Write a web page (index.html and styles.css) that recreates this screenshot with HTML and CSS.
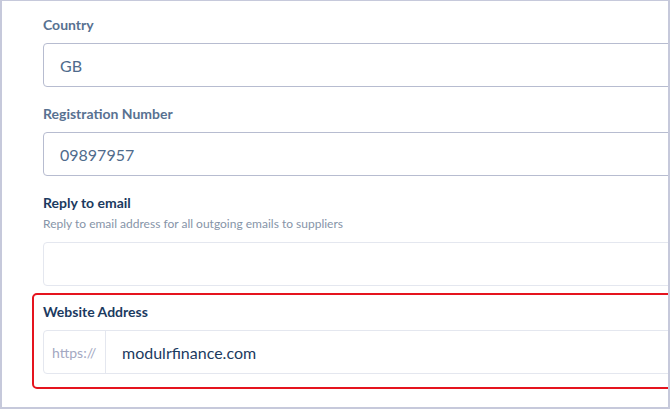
FILE: index.html
```html
<!DOCTYPE html>
<html lang="en">
<head>
<meta charset="utf-8">
<title>Company details</title>
<link rel="stylesheet" href="styles.css">
</head>
<body>
<div class="frame">
  <form class="form">
    <div class="field">
      <label class="label label-muted">Country</label>
      <div class="input input-strong">GB</div>
    </div>
    <div class="field">
      <label class="label label-muted">Registration Number</label>
      <div class="input input-strong">09897957</div>
    </div>
    <div class="field">
      <label class="label label-dark label-with-hint">Reply to email</label>
      <p class="hint">Reply to email address for all outgoing emails to suppliers</p>
      <div class="input input-light"></div>
    </div>
    <div class="field field-error">
      <label class="label label-dark">Website Address</label>
      <div class="input input-light input-group">
        <span class="prefix">https://</span>
        <span class="value">modulrfinance.com</span>
      </div>
    </div>
  </form>
</div>
</body>
</html>
```

FILE: styles.css
```css
* { box-sizing: border-box; }

html, body {
  margin: 0;
  padding: 0;
  background: #ffffff;
}

body {
  font-family: Lato, "Open Sans", "Liberation Sans", sans-serif;
}

.frame {
  width: 670px;
  height: 409px;
  border: 2px solid #c6c9db;
  border-top-width: 1px;
  overflow: hidden;
  background: #ffffff;
}

.form {
  width: 820px;
  margin: 0;
  padding: 15px 0 0 41px;
}

.field {
  margin-bottom: 18px;
}

.label {
  display: block;
  font-size: 14px;
  line-height: 17px;
  font-weight: 700;
  margin-bottom: 10px;
}

.label-muted { color: #587191; }
.label-dark { color: #1b3a5f; }
.label-with-hint { margin-bottom: 5px; }

.hint {
  margin: 0 0 11px;
  font-size: 12px;
  line-height: 15px;
  color: #8694a8;
}

.input {
  height: 44px;
  border-radius: 4px;
  border: 1px solid #bcc1d4;
  padding-left: 16px;
  display: flex;
  align-items: center;
  font-size: 16px;
  color: #4f6b8c;
}

.input-strong { border-color: #b7bcd0; }
.input-light { border-color: #e4e7ef; }

.field-error {
  margin-top: -11px;
  margin-left: -11px;
  border: 2px solid #e5141e;
  border-radius: 5px;
  padding: 8px 0 13px 9px;
}

.input-group {
  padding-left: 0;
  align-items: stretch;
}

.prefix {
  width: 62px;
  flex: none;
  display: flex;
  align-items: center;
  padding-left: 8px;
  font-size: 14px;
  color: #a3a8c2;
  border-right: 1px solid #e4e7ef;
}

.value {
  display: flex;
  align-items: center;
  padding-left: 16px;
  font-size: 16px;
  color: #1b3a5f;
}
```
